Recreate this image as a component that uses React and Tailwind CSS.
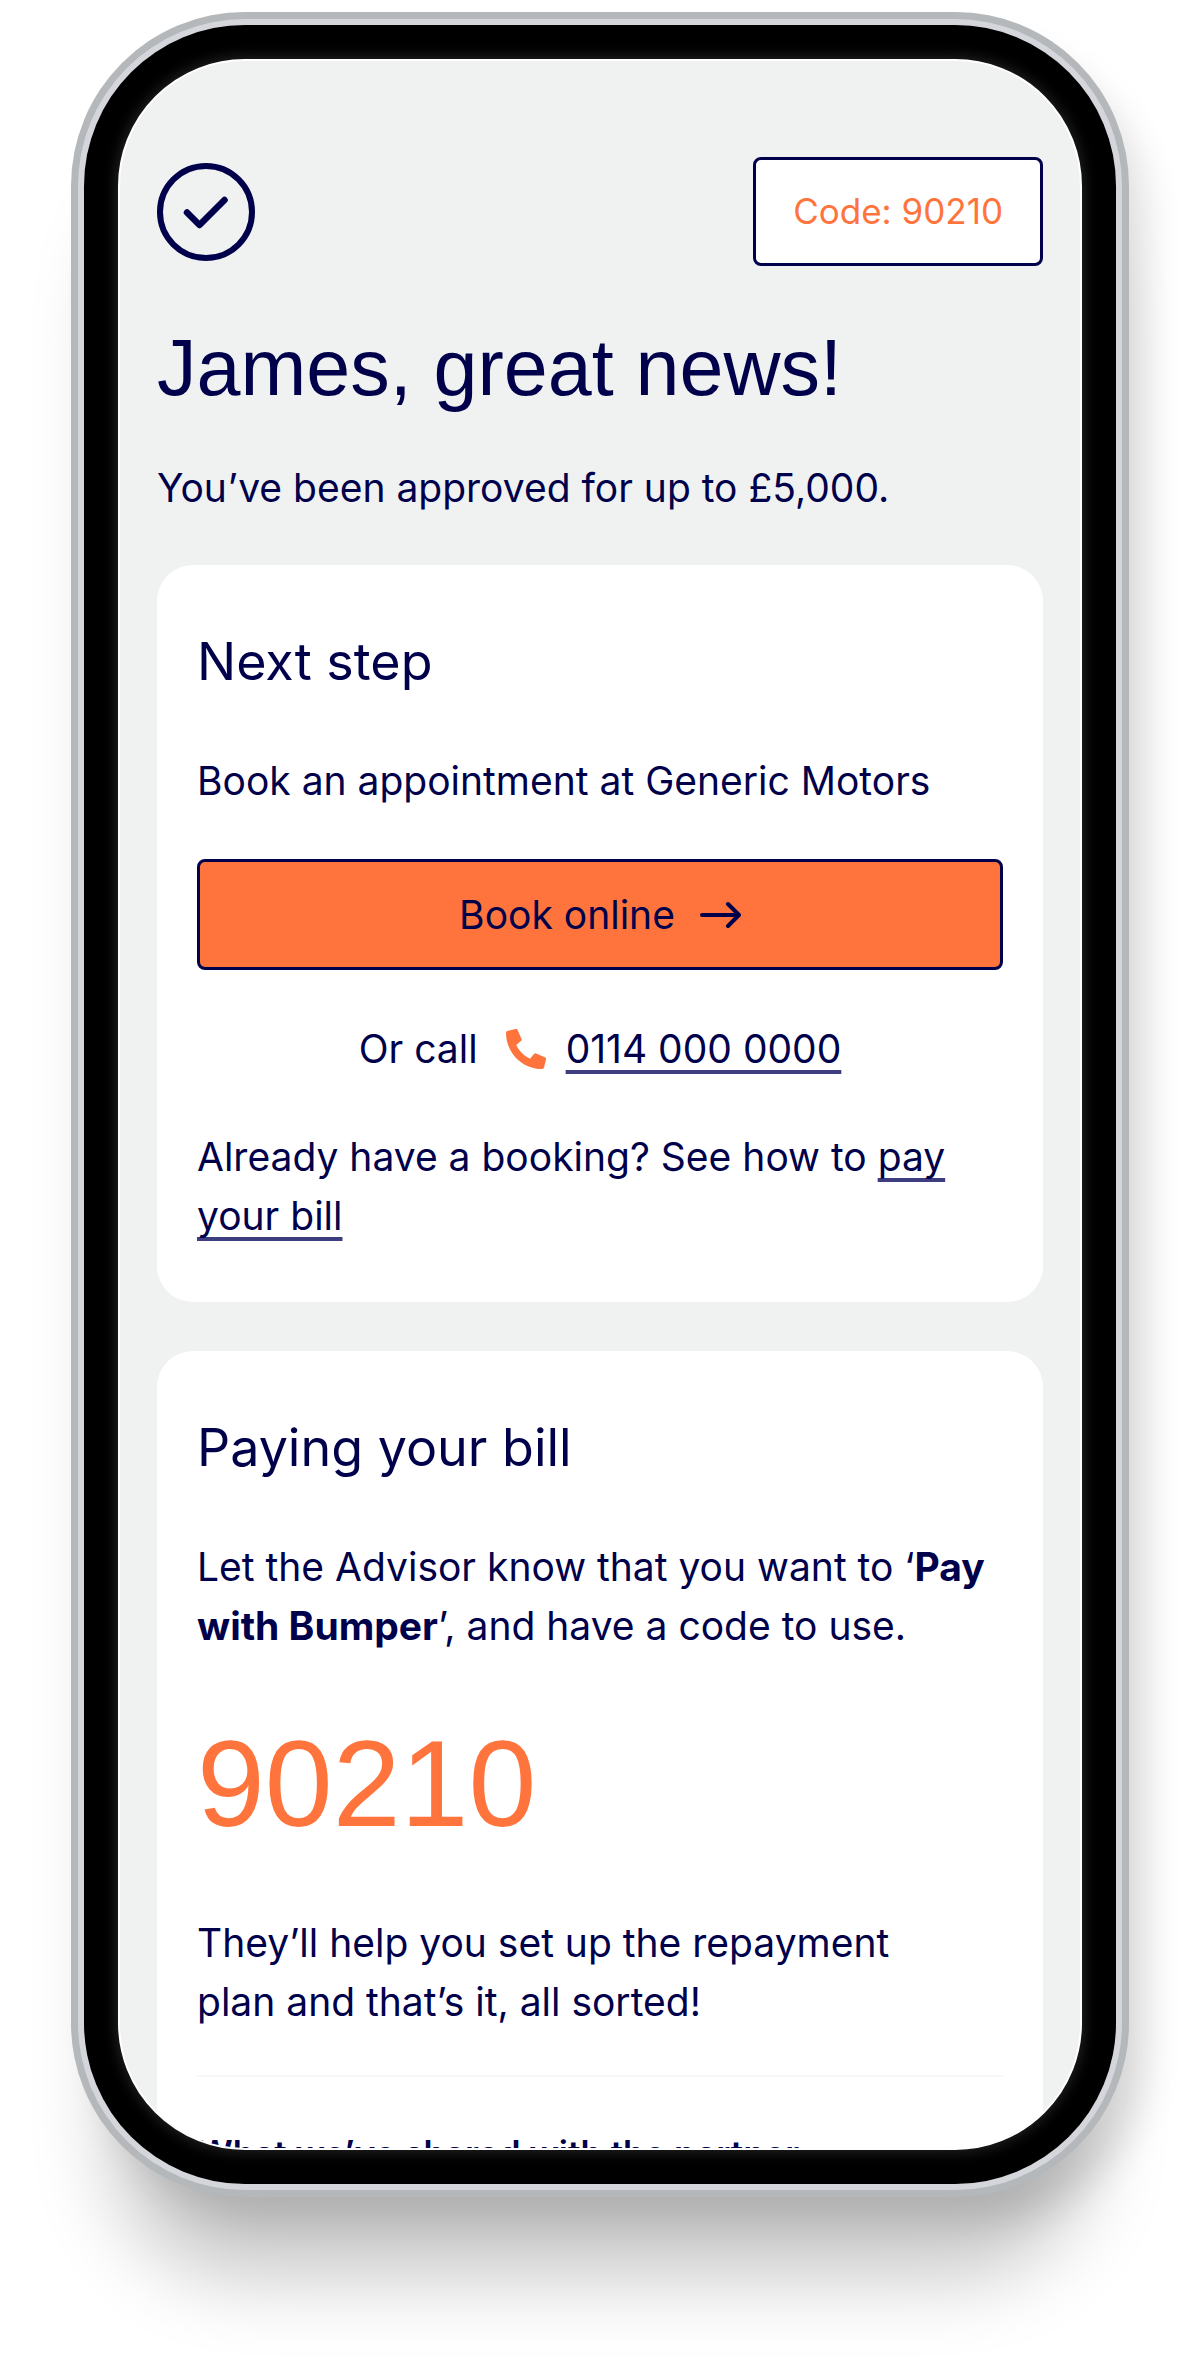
import { FaPhoneAlt } from 'react-icons/fa';

const CODE = '90210';

function CheckCircle() {
  return (
    <svg viewBox="0 0 98 98" className="size-[98px] shrink-0" fill="none" stroke="currentColor" role="img" aria-label="Approved">
      <circle cx="49" cy="49" r="46" strokeWidth="6" />
      <path d="M30 49.500L42.500 62L67.500 37" strokeWidth="6.500" strokeLinecap="round" strokeLinejoin="round" />
    </svg>
  );
}

function ArrowRight() {
  return (
    <svg viewBox="0 0 42 30" className="h-[30px] w-[42px]" fill="none" stroke="currentColor" strokeWidth="4" aria-hidden="true">
      <path d="M3 15H40M29 4L40 15L29 26" strokeLinecap="round" strokeLinejoin="round" />
    </svg>
  );
}

function Card({ title, children }) {
  return (
    <section className="flex flex-col gap-[49px] rounded-[36px] bg-white px-10 py-[57px]">
      <h2 className="text-[52px] leading-[80px]">{title}</h2>
      {children}
    </section>
  );
}

function TextLink({ href, children }) {
  return (
    <a href={href} className="underline decoration-[#3d3d80] decoration-[4px] underline-offset-[7px] [text-decoration-skip-ink:none]">
      {children}
    </a>
  );
}

export default function App() {
  return (
    <main className="min-h-screen bg-white px-[71px] pt-3 pb-[171px] font-['Inter',sans-serif] text-[39px] leading-[59px] text-[#00004b]">
      {/* Phone: metal rim, bezel, screen */}
      <div className="rounded-[174px] bg-[#b4b8bb] p-[7px] shadow-[0_120px_80px_-40px_rgba(0,0,0,0.22),24px_30px_36px_-6px_rgba(0,0,0,0.12)]">
        <div className="rounded-[167px] bg-[#d5d6dc] p-[6px]">
          <div className="rounded-[161px] bg-black p-[34px]">
            <div className="aspect-[964/2091] overflow-hidden rounded-[127px] border-2 border-white bg-[#f0f2f2] px-[37px] pt-24 shadow-[0_0_14px_2px_#242424]">
              <header className="flex items-center justify-between">
                <CheckCircle />
                <p className="rounded-lg border-[3px] border-[#00004b] bg-white px-[37px] py-[22px] text-[35px] text-[#ff743c]">
                  Code: {CODE}
                </p>
              </header>

              <h1 className="mt-[54px] font-['Liberation_Sans',sans-serif] text-[79px] leading-[96px]">
                James, great news!
              </h1>
              <p className="mt-[42px]">You’ve been approved for up to £5,000.</p>

              <div className="mt-12 flex flex-col gap-[49px]">
                <Card title="Next step">
                  <p>Book an appointment at Generic Motors</p>

                  <button
                    type="button"
                    className="flex items-center justify-center gap-6 rounded-lg border-[3px] border-[#00004b] bg-[#ff743c] py-[23px]"
                  >
                    Book online
                    <ArrowRight />
                  </button>

                  <p className="flex items-center justify-center">
                    Or call
                    <FaPhoneAlt size={40} className="mr-5 ml-7 text-[#ff743c]" aria-hidden="true" />
                    <TextLink href="tel:01140000000">0114 000 0000</TextLink>
                  </p>

                  <p>
                    Already have a booking? See how to <TextLink href="#paying">pay your bill</TextLink>
                  </p>
                </Card>

                <Card title="Paying your bill">
                  <p>
                    Let the Advisor know that you want to ‘<strong className="font-bold">Pay with Bumper</strong>’, and have a code to use.
                  </p>

                  <p className="font-['Liberation_Sans',sans-serif] text-[122px] leading-[160px] text-[#ff743c]">
                    {CODE}
                  </p>

                  <div className="flex flex-col gap-11">
                    <p className="pr-10">They’ll help you set up the repayment plan and that’s it, all sorted!</p>

                    <hr className="border-t-2 border-[#f7f8f8]" />

                    <h3 className="text-[35px] leading-[64px] font-semibold">What we’ve shared with the partner</h3>
                  </div>
                </Card>
              </div>
            </div>
          </div>
        </div>
      </div>
    </main>
  );
}
